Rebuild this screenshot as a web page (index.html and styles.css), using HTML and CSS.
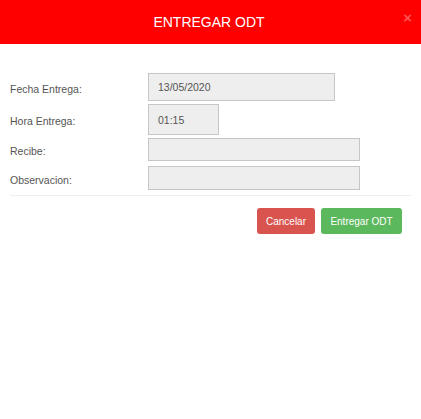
FILE: index.html
```html
<!DOCTYPE html>
<html lang="es">
<head>
<meta charset="utf-8">
<title>Entregar ODT</title>
<link rel="stylesheet" href="styles.css">
</head>
<body>
<div class="modal">
  <div class="modal-header">
    <h4 class="modal-title">ENTREGAR ODT</h4>
    <span class="close">&times;</span>
  </div>
  <div class="modal-body">
    <div class="row r1">
      <label class="lbl">Fecha Entrega:</label>
      <div class="field f-date">13/05/2020</div>
    </div>
    <div class="row r2">
      <label class="lbl">Hora Entrega:</label>
      <div class="field f-time">01:15</div>
    </div>
    <div class="row r3">
      <label class="lbl">Recibe:</label>
      <div class="field f-wide"></div>
    </div>
    <div class="row r4">
      <label class="lbl">Observacion:</label>
      <div class="field f-wide f-obs"></div>
    </div>
    <div class="modal-footer">
      <button class="btn btn-danger">Cancelar</button>
      <button class="btn btn-success">Entregar ODT</button>
    </div>
  </div>
</div>
</body>
</html>
```

FILE: styles.css
```css
* { box-sizing: border-box; }
html, body {
  margin: 0;
  padding: 0;
  background: #fff;
  font-family: "Liberation Sans", Arial, sans-serif;
}
.modal {
  width: 421px;
  height: 419px;
  background: #fff;
}
.modal-header {
  position: relative;
  height: 44px;
  background: #ff0000;
  display: flex;
  align-items: center;
  justify-content: center;
}
.modal-title {
  margin: 0;
  color: #fff;
  font-size: 14px;
  font-weight: normal;
  line-height: 16px;
  padding-right: 3px;
}
.close {
  position: absolute;
  right: 9px;
  top: 10px;
  font-size: 15px;
  font-weight: bold;
  line-height: 16px;
  color: #ff5252;
}
.modal-body {
  padding: 29px 10px 0 10px;
}
.row {
  display: flex;
  align-items: center;
}
.r2 { margin-top: 3px; }
.r3 { margin-top: 3px; }
.r4 { margin-top: 5px; }
.lbl {
  width: 138px;
  font-size: 10.5px;
  color: #555;
  padding-top: 3px;
}
.field {
  background: #eeeeee;
  border: 1px solid #c6c6c6;
  font-size: 10.5px;
  color: #555;
  padding-left: 9px;
  display: flex;
  align-items: center;
}
.f-date { width: 187px; height: 28px; }
.f-time { width: 71px; height: 31px; }
.f-wide { width: 212px; height: 23px; }
.f-obs { height: 24px; }
.modal-footer {
  margin-top: 5px;
  border-top: 1px solid #eeeeee;
  padding: 12px 9px 0 0;
  display: flex;
  justify-content: flex-end;
  gap: 6px;
}
.btn {
  height: 26px;
  border: none;
  border-radius: 3px;
  color: #fff;
  font-family: "Liberation Sans", Arial, sans-serif;
  font-size: 10px;
  padding: 0;
}
.btn-danger { background: #d9534f; width: 58px; }
.btn-success { background: #5cb85c; width: 81px; }
```
